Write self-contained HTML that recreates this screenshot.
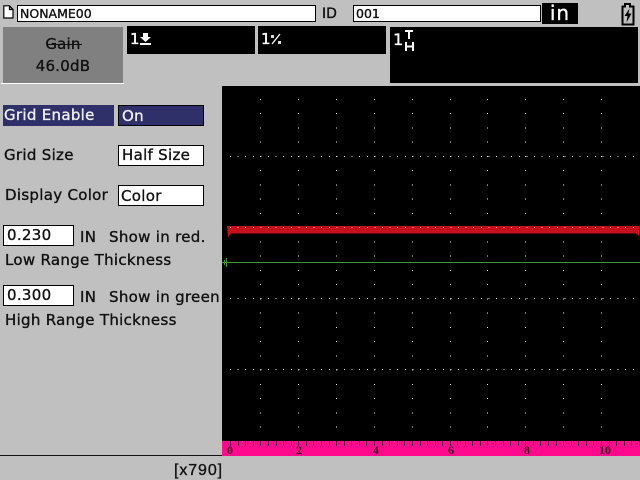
<!DOCTYPE html>
<html><head><meta charset="utf-8"><style>
html,body{margin:0;padding:0;background:#c0c0c0}
#p{position:relative;width:640px;height:480px;overflow:hidden;background:#c0c0c0;font-family:"DejaVu Sans",sans-serif;color:#111;-webkit-text-stroke:.35px currentColor}
#p div{position:absolute;box-sizing:border-box;white-space:nowrap}
.f{background:#fff;border:1px solid #000;font-size:15px;line-height:19px;padding-left:3px;letter-spacing:.3px}
.t{font-size:15px;line-height:20px;letter-spacing:.3px}
.b{background:#000;color:#fff}
</style></head><body><div id="p">
<svg style="position:absolute;left:3px;top:5px" width="11" height="14" viewBox="0 0 11 14"><path d="M.8.8H6.500L10 4.500V13H.8Z M6.500.8V4.500H10" fill="#fff" stroke="#000" stroke-width="1.200"/></svg>
<div class="f" style="left:17px;top:5px;width:299px;height:17px;line-height:15px;font-size:12.500px;padding-left:2px;letter-spacing:0">NONAME00</div>
<div class="t" style="left:322px;top:4px;font-size:14px;letter-spacing:0">ID</div>
<div class="f" style="left:353px;top:5px;width:188px;height:17px;line-height:15px;font-size:12.500px;padding-left:2px;letter-spacing:0">001</div>
<div class="b" style="left:542px;top:3px;width:36px;height:21px;font-size:20px;line-height:21px;text-align:center;letter-spacing:1px">in</div>
<svg style="position:absolute;left:620px;top:2px" width="16" height="24" viewBox="0 0 16 24"><path d="M5 2H10V4.500H13.500V22.500H2.500V4.500H5Z" fill="#c0c0c0" stroke="#000" stroke-width="2"/><path d="M9.500 6.500L4.500 14H7.500L6.500 20.500L11.500 11.500H8.500Z" fill="#000"/></svg>

<div style="left:1px;top:83px;width:123px;height:1px;background:#fff"></div>
<div style="left:3px;top:27px;width:120px;height:56px;background:#808080;text-align:center;font-size:15px;color:#111;line-height:20px;padding-top:7px;letter-spacing:.2px">Gain<br><span style="line-height:25px">46.0dB</span></div>
<div style="left:48px;top:44px;width:34px;height:1px;background:#111"></div>

<div class="b" style="left:127px;top:26px;width:128px;height:28px"></div>
<div class="b" style="left:130px;top:29px;font-size:15px;line-height:20px;background:none">1</div>
<svg style="position:absolute;left:139px;top:32px" width="13" height="14" viewBox="0 0 13 14"><path d="M4 1H9V5H12L6.500 10L1 5H4Z" fill="#fff"/><rect x="1" y="11" width="11" height="2" fill="#fff"/></svg>
<div class="b" style="left:258px;top:26px;width:128px;height:28px"></div>
<div class="b" style="left:261px;top:29px;font-size:15px;line-height:20px;background:none">1</div>
<svg style="position:absolute;left:270px;top:33px" width="12" height="12" viewBox="0 0 12 12"><path d="M10 1L2 11" stroke="#fff" stroke-width="1.300"/><rect x="1" y="2" width="3" height="3" fill="#ddd"/><rect x="8" y="8" width="3" height="3" fill="#ddd"/></svg>
<div class="b" style="left:390px;top:27px;width:248px;height:56px"></div>
<div class="b" style="left:393px;top:30px;font-size:16px;line-height:20px;background:none">1</div>
<svg style="position:absolute;left:404px;top:29px" width="12" height="23" viewBox="0 0 12 23"><path d="M1 2H9M5 2V10M2 13V22M9 13V22M2 17.500H9" stroke="#fff" stroke-width="2" fill="none"/></svg>

<div class="t" style="left:3px;top:105px;width:111px;height:21px;background:#2f2f6a;color:#eee;padding-left:1px;line-height:20px">Grid Enable</div>
<div class="f" style="left:118px;top:105px;width:86px;height:21px;background:#2f2f6a;color:#eee;padding-left:3px;line-height:20px">On</div>
<div class="t" style="left:4px;top:145px">Grid Size</div>
<div class="f" style="left:118px;top:145px;width:86px;height:21px;padding-left:3px">Half Size</div>
<div class="t" style="left:5px;top:185px">Display Color</div>
<div class="f" style="left:118px;top:185px;width:86px;height:21px;padding-left:2px;line-height:20px">Color</div>
<div class="f" style="left:3px;top:225px;width:71px;height:21px;padding-left:3px">0.230</div>
<div class="t" style="left:80px;top:227px">IN</div>
<div class="t" style="left:109px;top:227px">Show in red.</div>
<div class="t" style="left:5px;top:250px">Low Range Thickness</div>
<div class="f" style="left:3px;top:285px;width:71px;height:21px;padding-left:3px">0.300</div>
<div class="t" style="left:80px;top:287px">IN</div>
<div class="t" style="left:109px;top:287px;width:111px;overflow:hidden">Show in green</div>
<div class="t" style="left:5px;top:310px">High Range Thickness</div>

<svg style="position:absolute;left:222px;top:86px" width="418" height="370" viewBox="222 86 418 370">
<rect x="222" y="86" width="418" height="355" fill="#000"/>
<g stroke="#e8e8e8" stroke-width="1" shape-rendering="crispEdges" fill="none">
<g stroke-dasharray="1 13.24">
<path d="M260.500 99V441M298.500 99V441M336.500 99V441M374.500 99V441M412.500 99V441M450.500 99V441M487.500 99V441M525.500 99V441M563.500 99V441M601.500 99V441"/>
</g>
<g stroke-dasharray="1 6.600">
<path d="M230 156.500H640M230 227.500H640M230 298.500H640M230 369.500H640"/>
</g>
</g>
<path d="M227 226H639V236L636 233.500H231L228 237Z" fill="#c8101c"/>
<g stroke="#eeb0b0" stroke-width="1" stroke-dasharray="1 6.600" shape-rendering="crispEdges"><path d="M230 227.500H636"/></g>
<path d="M222 262.500H640" stroke="#3f9a3f" stroke-width="1" shape-rendering="crispEdges"/>
<path d="M226.500 258V267M224.500 260V265" stroke="#3f9a3f" stroke-width="1"/>
<rect x="222" y="441" width="418" height="15" fill="#ff0a8c"/>
<g stroke="#4a0028" stroke-width="1" shape-rendering="crispEdges">
<path d="M230.500 441V446M238.500 441V446M245.500 441V446M253.500 441V446M260.500 441V446M268.500 441V446M276.500 441V446M283.500 441V446M291.500 441V446M298.500 441V446M306.500 441V446M313.500 441V446M321.500 441V446M329.500 441V446M336.500 441V446M344.500 441V446M351.500 441V446M359.500 441V446M366.500 441V446M374.500 441V446M382.500 441V446M389.500 441V446M397.500 441V446M404.500 441V446M412.500 441V446M420.500 441V446M427.500 441V446M435.500 441V446M442.500 441V446M450.500 441V446M457.500 441V446M465.500 441V446M472.500 441V446M480.500 441V446M487.500 441V446M495.500 441V446M503.500 441V446M510.500 441V446M518.500 441V446M525.500 441V446M533.500 441V446M540.500 441V446M548.500 441V446M556.500 441V446M563.500 441V446M571.500 441V446M578.500 441V446M586.500 441V446M593.500 441V446M601.500 441V446M609.500 441V446M616.500 441V446M624.500 441V446M631.500 441V446M639.500 441V446"/>
</g>
<g font-family="Liberation Serif,serif" font-size="12" fill="#3a0020" font-weight="bold" text-anchor="middle" style="-webkit-text-stroke:0">
<text x="230" y="454">0</text><text x="299" y="454">2</text><text x="376" y="454">4</text><text x="451" y="454">6</text><text x="527" y="454">8</text><text x="605" y="454">10</text>
</g>
</svg>
<div style="left:0;top:455px;width:222px;height:1px;background:#111"></div>
<div style="left:174px;top:461px;font-size:16px;line-height:19px;font-family:'Liberation Sans',sans-serif;letter-spacing:.9px">[x790]</div>
</div></body></html>
